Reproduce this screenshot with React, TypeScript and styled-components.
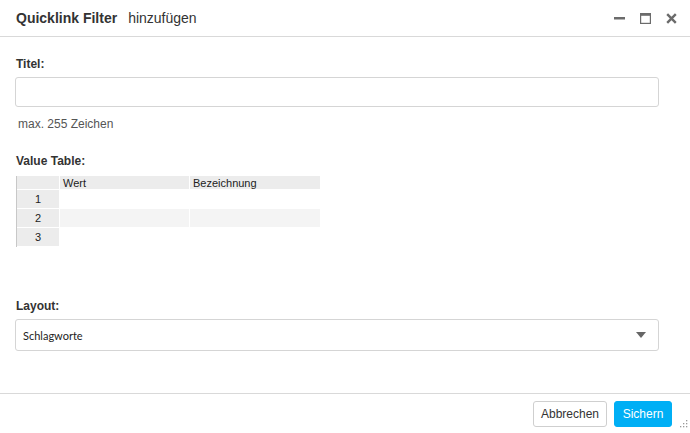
import React from "react"
import styled, { createGlobalStyle } from "styled-components"

const GlobalStyle = createGlobalStyle`
  html, body {
    margin: 0;
    padding: 0;
    background: #fff;
  }
  body {
    font-family: "Liberation Sans", Arial, sans-serif;
    color: #333;
  }
`

const Dialog = styled.div`
  width: 690px;
  height: 433px;
  display: flex;
  flex-direction: column;
  background: #fff;
  position: relative;
  box-sizing: border-box;
`

const Header = styled.div`
  height: 37px;
  border-bottom: 1px solid #d9d9d9;
  display: flex;
  align-items: center;
  padding: 0 13px 0 16px;
  box-sizing: border-box;
`

const Title = styled.div`
  font-size: 14px;
  font-weight: bold;
  color: #333;
`

const SubTitle = styled.div`
  font-size: 14px;
  color: #333;
  margin-left: 11px;
  flex: 1;
`

const HeadIcons = styled.div`
  display: flex;
  align-items: center;
  gap: 15px;
`

const IconBtn = styled.span`
  width: 11px;
  height: 11px;
  display: flex;
  align-items: center;
  justify-content: center;
`

const Body = styled.div`
  flex: 1;
  padding: 20px 31px 0 15px;
  box-sizing: border-box;
`

const Label = styled.div<{ $top?: number }>`
  font-size: 12px;
  font-weight: bold;
  color: #333;
  margin-top: ${p => p.$top ?? 0}px;
  margin-left: 1px;
`

const TextInput = styled.div`
  margin-top: 6px;
  height: 30px;
  border: 1px solid #d5d5d5;
  border-radius: 3px;
  box-sizing: border-box;
`

const Hint = styled.div`
  font-size: 12px;
  color: #555;
  margin-top: 10px;
  margin-left: 3px;
`

const Table = styled.div`
  margin-top: 8px;
  margin-left: 1px;
  display: grid;
  grid-template-columns: 43px 130px 131px;
  width: 304px;
  border-left: 1px solid #c8c8c8;
  font-size: 11px;
  color: #222;
`

const Cell = styled.div<{ $head?: boolean; $alt?: boolean; $row?: boolean }>`
  height: ${p => (p.$head ? 14 : 19)}px;
  box-sizing: border-box;
  display: flex;
  align-items: center;
  justify-content: ${p => (p.$row ? "center" : "flex-start")};
  padding-left: ${p => (p.$row ? 0 : 3)}px;
  background: ${p => (p.$head || p.$row ? "#ececec" : p.$alt ? "#f4f4f4" : "#fff")};
  border-bottom: 1px solid #fff;
  border-right: 1px solid #fff;
`

const Select = styled.div`
  margin-top: 6px;
  height: 32px;
  border: 1px solid #d5d5d5;
  border-radius: 3px;
  box-sizing: border-box;
  display: flex;
  align-items: center;
  padding: 0 12px 0 7px;
  font-family: Lato, "Liberation Sans", sans-serif;
  font-size: 11px;
  color: #222;
`

const SelectText = styled.div`
  flex: 1;
`

const Caret = styled.div`
  width: 0;
  height: 0;
  border-left: 5px solid transparent;
  border-right: 5px solid transparent;
  border-top: 6px solid #666;
`

const Footer = styled.div`
  height: 40px;
  border-top: 1px solid #d9d9d9;
  display: flex;
  align-items: center;
  justify-content: flex-end;
  gap: 7px;
  padding: 0 18px 0 0;
  box-sizing: border-box;
`

const Button = styled.button<{ $primary?: boolean }>`
  height: 26px;
  padding: 0 7px;
  border-radius: 3px;
  font-family: "Liberation Sans", Arial, sans-serif;
  font-size: 12px;
  border: 1px solid ${p => (p.$primary ? "#00aff5" : "#cfcfcf")};
  background: ${p => (p.$primary ? "#00aff5" : "#fff")};
  color: ${p => (p.$primary ? "#fff" : "#333")};
  min-width: ${p => (p.$primary ? 58 : 72)}px;
`

const Grip = styled.svg`
  position: absolute;
  right: 1px;
  bottom: 4px;
`

export default function App() {
  const rows = [1, 2, 3]
  return (
    <Dialog>
      <GlobalStyle />
      <Header>
        <Title>Quicklink Filter</Title>
        <SubTitle>hinzufügen</SubTitle>
        <HeadIcons>
          <IconBtn>
            <svg width="11" height="11" viewBox="0 0 11 11">
              <rect x="0" y="4" width="11" height="2.5" fill="#6b6b6b" />
            </svg>
          </IconBtn>
          <IconBtn>
            <svg width="11" height="11" viewBox="0 0 11 11">
              <rect x="0.6" y="0.6" width="9.8" height="9.8" fill="none" stroke="#6b6b6b" strokeWidth="1.2" />
              <rect x="0.6" y="0.6" width="9.8" height="2.2" fill="#6b6b6b" />
            </svg>
          </IconBtn>
          <IconBtn>
            <svg width="11" height="11" viewBox="0 0 11 11">
              <path d="M1.2 1.2 L9.8 9.8 M9.8 1.2 L1.2 9.8" stroke="#6b6b6b" strokeWidth="2.4" />
            </svg>
          </IconBtn>
        </HeadIcons>
      </Header>
      <Body>
        <Label>Titel:</Label>
        <TextInput />
        <Hint>max. 255 Zeichen</Hint>
        <Label $top={23}>Value Table:</Label>
        <Table>
          <Cell $head />
          <Cell $head>Wert</Cell>
          <Cell $head>Bezeichnung</Cell>
          {rows.map(r => (
            <React.Fragment key={r}>
              <Cell $row>{r}</Cell>
              <Cell $alt={r === 2} />
              <Cell $alt={r === 2} />
            </React.Fragment>
          ))}
        </Table>
        <Label $top={52}>Layout:</Label>
        <Select>
          <SelectText>Schlagworte</SelectText>
          <Caret />
        </Select>
      </Body>
      <Footer>
        <Button>Abbrechen</Button>
        <Button $primary>Sichern</Button>
      </Footer>
      <Grip width="10" height="10" viewBox="0 0 10 10">
        <rect x="7" y="1" width="1.3" height="1.3" fill="#999" />
        <rect x="4" y="4" width="1.3" height="1.3" fill="#999" />
        <rect x="7" y="4" width="1.3" height="1.3" fill="#999" />
        <rect x="1" y="7" width="1.3" height="1.3" fill="#999" />
        <rect x="4" y="7" width="1.3" height="1.3" fill="#999" />
        <rect x="7" y="7" width="1.3" height="1.3" fill="#999" />
      </Grip>
    </Dialog>
  )
}
